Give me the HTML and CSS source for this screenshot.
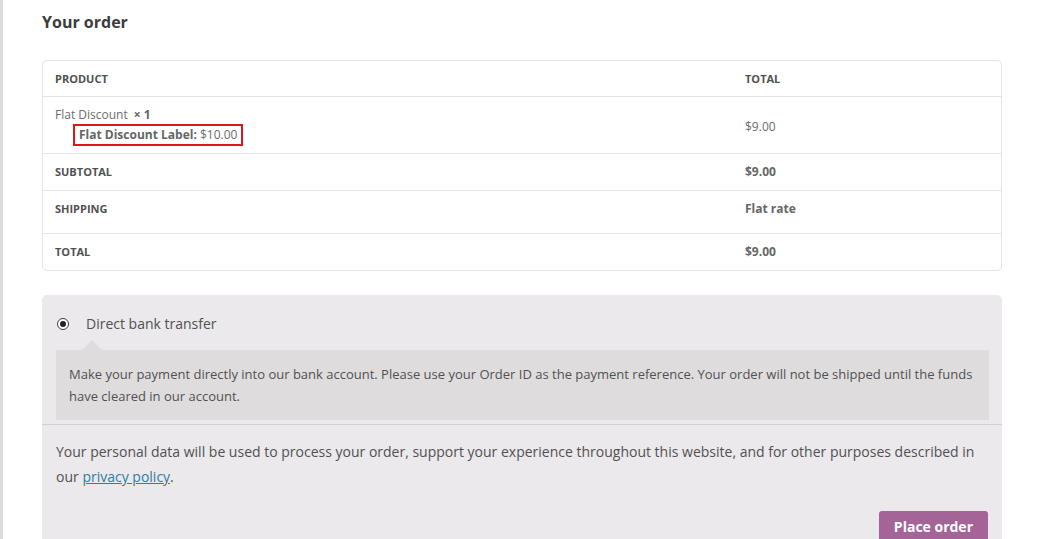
FILE: index.html
```html
<!DOCTYPE html>
<html lang="en">
<head>
    <meta charset="UTF-8">
    <title>Checkout</title>
    <link rel="stylesheet" href="styles.css">
</head>
<body>
<div class="page">
    <h3 class="order-title">Your order</h3>
    <table class="order-table">
        <thead>
        <tr>
            <th class="col-product">Product</th>
            <th class="col-total">Total</th>
        </tr>
        </thead>
        <tbody>
        <tr class="cart-item">
            <td>
                Flat Discount <strong class="qty">&times;&nbsp;1</strong>
                <div class="item-meta"><span class="meta-box"><strong>Flat Discount Label:</strong> $10.00</span></div>
            </td>
            <td>$9.00</td>
        </tr>
        </tbody>
        <tfoot>
        <tr class="subtotal">
            <th>Subtotal</th>
            <td><strong>$9.00</strong></td>
        </tr>
        <tr class="shipping">
            <th>Shipping</th>
            <td><strong>Flat rate</strong></td>
        </tr>
        <tr class="grand-total">
            <th>Total</th>
            <td><strong>$9.00</strong></td>
        </tr>
        </tfoot>
    </table>

    <div class="payment">
        <ul class="methods">
            <li class="method">
                <label class="method-label"><span class="radio"></span>Direct bank transfer</label>
                <div class="method-box">
                    Make your payment directly into our bank account. Please use your Order ID as the payment reference. Your order will not be shipped until the funds have cleared in our account.
                </div>
            </li>
        </ul>
        <div class="place-order">
            <p class="privacy">Your personal data will be used to process your order, support your experience throughout this website, and for other purposes described in our <a href="#">privacy policy</a>.</p>
            <div class="actions">
                <button class="btn-place" type="button">Place order</button>
            </div>
        </div>
    </div>
</div>
</body>
</html>
```

FILE: styles.css
```css
html, body{
    margin: 0;
    padding: 0;
    background: #fff;
    height: 100%;
    overflow: hidden;
}
body{
    font-family: "Open Sans", "Liberation Sans", sans-serif;
    color: #515151;
    border-left: 3px solid #dcdcdc;
}
.page{
    padding: 0 39px 0 39px;
    width: 960px;
}
.order-title{
    margin: 0;
    padding-top: 10px;
    font-size: 16px;
    line-height: 24px;
    font-weight: 700;
    color: #3c3c3c;
}

.order-table{
    margin-top: 26px;
    width: 960px;
    border: 1px solid #e4e4e4;
    border-radius: 5px;
    border-collapse: separate;
    border-spacing: 0;
    font-size: 12px;
    color: #6d6d6d;
}
.order-table th,
.order-table td{
    text-align: left;
    padding: 11px 12px 11px;
    line-height: 14px;
    border-top: 1px solid #e4e4e4;
    vertical-align: middle;
}
.order-table thead th{
    border-top: 0;
    font-size: 11px;
    font-weight: 700;
    text-transform: uppercase;
    color: #515151;
    padding: 11px 12px 10px;
}
.order-table tfoot th{
    font-size: 11px;
    font-weight: 700;
    text-transform: uppercase;
    color: #515151;
}
.order-table strong{
    font-weight: 700;
    color: #666;
}
.col-product{
    width: 666px;
}
.cart-item td{
    padding: 11px 12px 7px;
}
.qty{
    margin-left: 3px;
}
.item-meta{
    margin: 2px 0 0 18px;
}
.meta-box{
    display: inline-block;
    border: 2px solid #e0141e;
    padding: 2px 4px 2px 4px;
    line-height: 14px;
}
.shipping th,
.shipping td{
    vertical-align: top;
    padding-top: 11px;
    padding-bottom: 17px;
}

.payment{
    margin-top: 24px;
    background: #ebe9eb;
    border-radius: 5px;
    height: 260px;
}
.methods{
    list-style: none;
    margin: 0;
    padding: 18px 13px 4px 14px;
    border-bottom: 1px solid #d3ced2;
}
.method-label{
    display: flex;
    align-items: center;
    font-size: 14px;
    line-height: 22px;
    color: #515151;
}
.radio{
    box-sizing: border-box;
    width: 12px;
    height: 12px;
    border: 1.5px solid #3a3a3a;
    border-radius: 50%;
    margin: 0 17px 0 1px;
    position: relative;
    background: #fff;
}
.radio::after{
    content: "";
    position: absolute;
    left: 1.5px;
    top: 1.5px;
    width: 6px;
    height: 6px;
    border-radius: 50%;
    background: #222;
}
.method-box{
    position: relative;
    margin-top: 15px;
    background: #dfdcde;
    padding: 13px 12px 13px 13px;
    font-size: 13px;
    line-height: 22px;
    color: #515151;
}
.method-box::before{
    content: "";
    position: absolute;
    top: -10px;
    left: 26px;
    border: 10px solid transparent;
    border-top: 0;
    border-bottom-color: #dfdcde;
}
.place-order{
    padding: 14px 14px 0 14px;
}
.privacy{
    margin: 0;
    font-size: 14px;
    line-height: 25px;
    color: #515151;
}
.privacy a{
    color: #2a7ea7;
}
.actions{
    display: flex;
    justify-content: flex-end;
    margin-top: 22px;
}
.btn-place{
    background: #a46497;
    color: #fff;
    border: 0;
    border-radius: 3px;
    font-family: inherit;
    font-size: 14px;
    font-weight: 700;
    padding: 5px 15px 8px;
    line-height: 22px;
}
```
